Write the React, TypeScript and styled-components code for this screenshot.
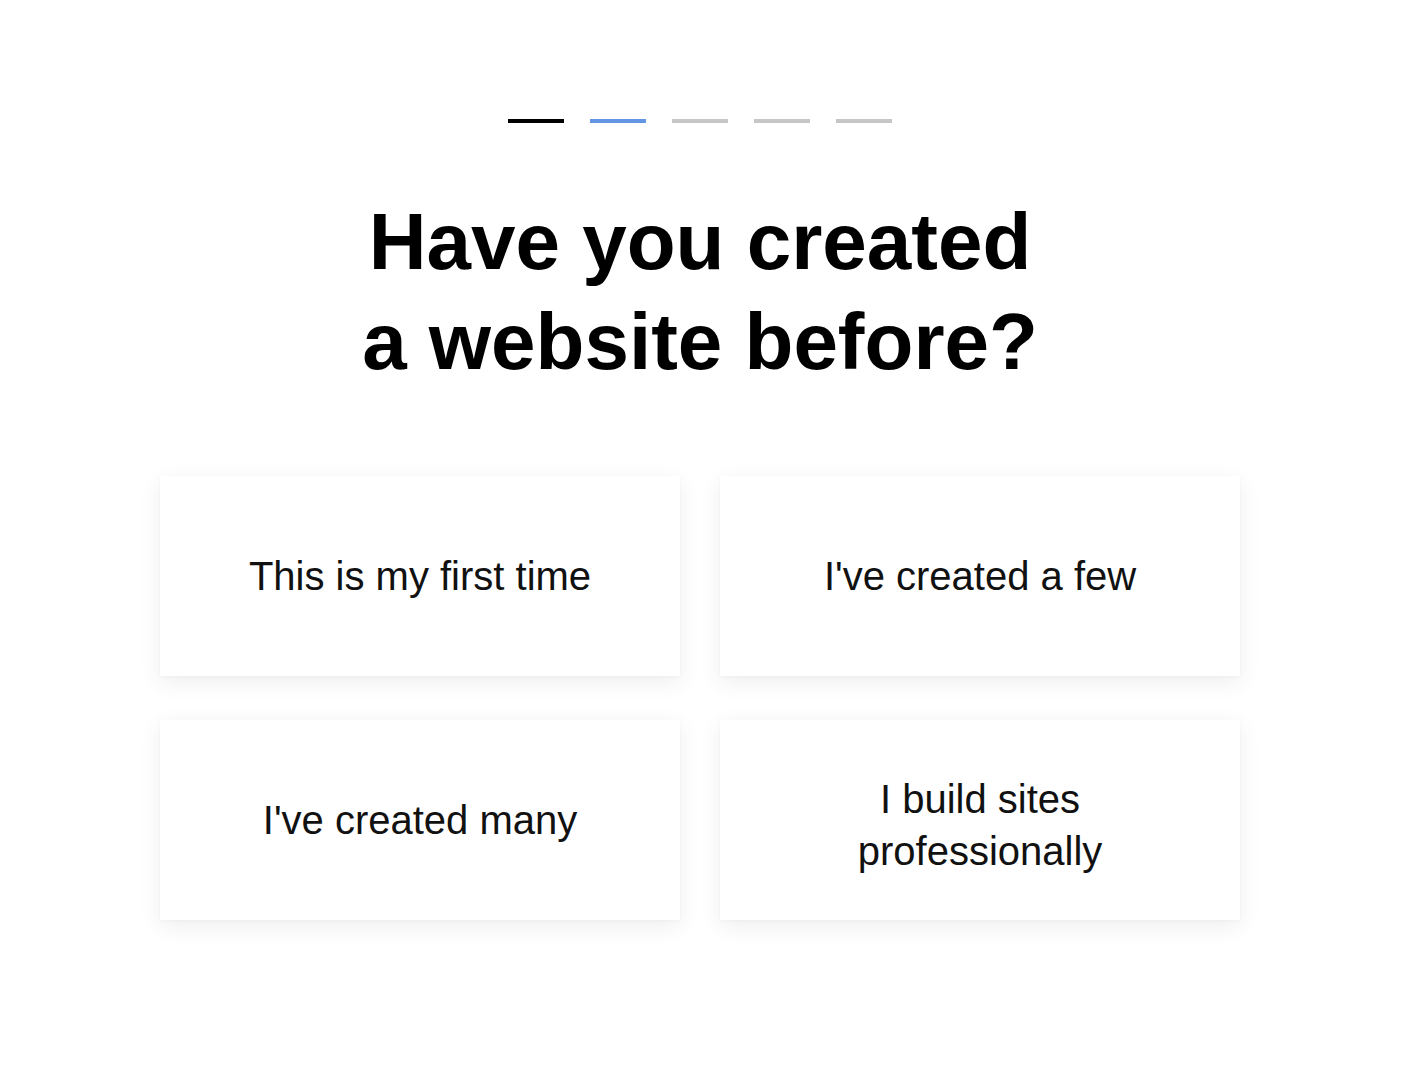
import React from "react";
import styled, { createGlobalStyle } from "styled-components";

const Global = createGlobalStyle`
  html, body { margin: 0; padding: 0; background: #ffffff; }
  body { font-family: "Liberation Sans", Arial, Helvetica, sans-serif; color: #000; }
`;

const Page = styled.main`
  display: flex;
  flex-direction: column;
  align-items: center;
  padding: 119px 8px 0 0;
  min-height: 1074px;
  box-sizing: border-box;
`;

const Progress = styled.div`
  display: flex;
  gap: 26px;
`;

const Step = styled.span<{ $state: "done" | "active" | "todo" }>`
  display: block;
  width: 56px;
  height: 4px;
  background: ${(p) =>
    p.$state === "done" ? "#000000" : p.$state === "active" ? "#6495e2" : "#c6c6c6"};
`;

const Title = styled.h1`
  margin: 69px 0 0;
  font-size: 80px;
  line-height: 100px;
  font-weight: 700;
  text-align: center;
  color: #000;
`;

const Options = styled.div`
  margin-top: 84px;
  display: grid;
  grid-template-columns: repeat(2, 520px);
  column-gap: 40px;
  row-gap: 44px;
`;

const Option = styled.button<{ $lines: number }>`
  height: 200px;
  box-sizing: border-box;
  display: flex;
  align-items: center;
  justify-content: center;
  padding: ${(p) => (p.$lines > 1 ? "9px 60px 0" : "0 60px 1px")};
  border: none;
  background: #ffffff;
  box-shadow: 0 6px 22px rgba(0, 0, 0, 0.07), 0 1px 4px rgba(0, 0, 0, 0.03);
  font-family: "Liberation Sans", Arial, Helvetica, sans-serif;
  font-size: 40px;
  line-height: 52px;
  color: #111;
  text-align: center;
  cursor: pointer;
`;

const steps: Array<"done" | "active" | "todo"> = ["done", "active", "todo", "todo", "todo"];
const options: string[][] = [
  ["This is my first time"],
  ["I've created a few"],
  ["I've created many"],
  ["I build sites", "professionally"],
];

export default function App() {
  return (
    <>
      <Global />
      <Page>
        <Progress>
          {steps.map((s, i) => (
            <Step key={i} $state={s} />
          ))}
        </Progress>
        <Title>
          Have you created
          <br />a website before?
        </Title>
        <Options>
          {options.map((lines) => (
            <Option key={lines.join(" ")} $lines={lines.length}>
              <span>
                {lines.map((l, i) => (
                  <React.Fragment key={l}>
                    {i > 0 && <br />}
                    {l}
                  </React.Fragment>
                ))}
              </span>
            </Option>
          ))}
        </Options>
      </Page>
    </>
  );
}
